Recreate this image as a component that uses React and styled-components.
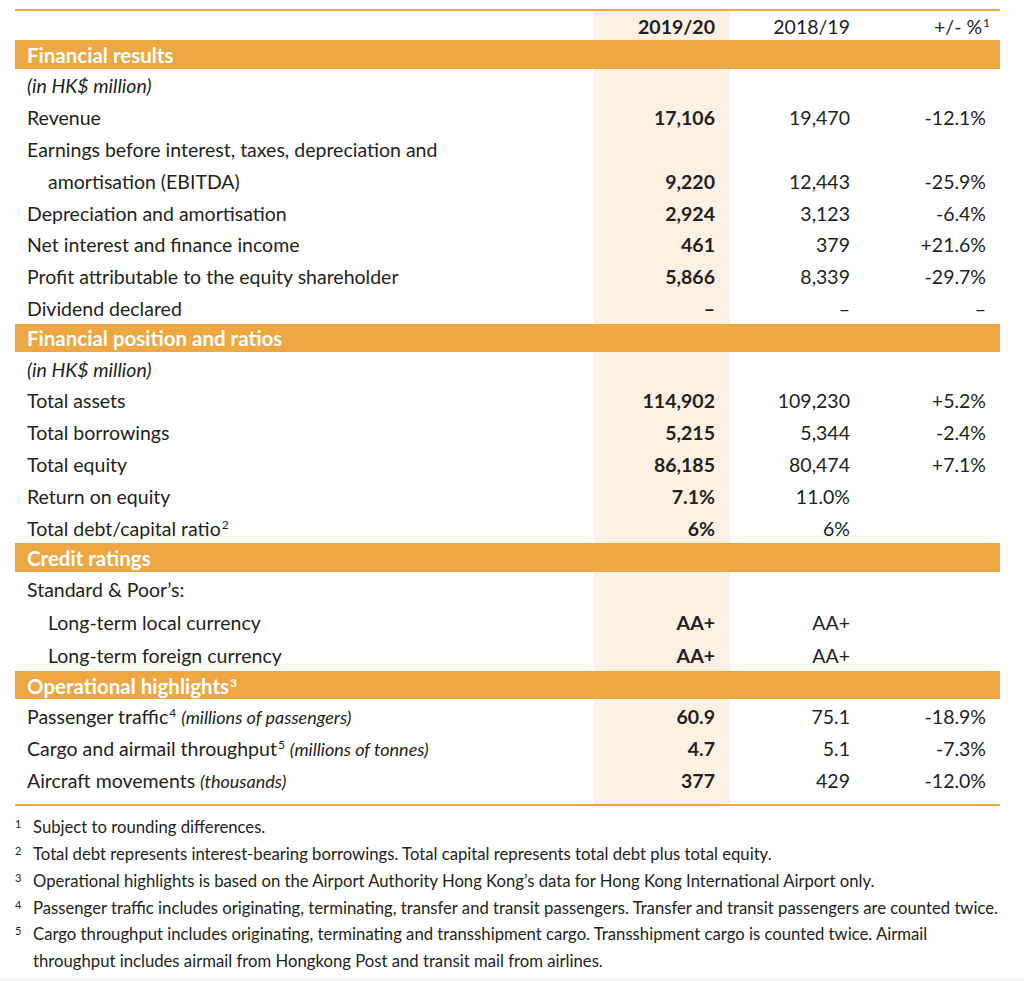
import styled, { createGlobalStyle } from "styled-components";

const GlobalStyle = createGlobalStyle`
  html, body {
    margin: 0;
    padding: 0;
    background: #f7f7f7;
  }
  body {
    font-family: Lato, "Noto Sans", sans-serif;
    color: #231f20;
  }
`;

const ORANGE = "#eda843";
const HIGHLIGHT = "#fcf1e3";

const Page = styled.div`
  background: #fff;
  min-height: 978px;
  padding: 9px 24px 0 15px;
  box-sizing: border-box;
`;

const Table = styled.div`
  border-top: 2px solid ${ORANGE};
  border-bottom: 2px solid ${ORANGE};
`;

const Row = styled.div`
  display: grid;
  grid-template-columns: 579px 136px 120px 1fr;
  height: ${(props) => props.h || 31.9}px;
  align-items: stretch;
  font-size: 19.5px;
`;

const Label = styled.div`
  display: flex;
  align-items: center;
  padding: 2px 0 0 ${(props) => (props.indent ? 33 : 12)}px;
  font-style: ${(props) => (props.italic ? "italic" : "normal")};
  white-space: nowrap;
`;

const Cur = styled.div`
  display: flex;
  align-items: center;
  justify-content: flex-end;
  padding: 2px 15px 0 0;
  background: ${HIGHLIGHT};
  font-weight: 700;
`;

const Num = styled.div`
  display: flex;
  align-items: center;
  justify-content: flex-end;
  padding: 2px ${(props) => props.pr || 0}px 0 0;
`;

const Section = styled.div`
  background: ${ORANGE};
  color: #fff;
  font-weight: 700;
  font-size: 20.5px;
  height: 28.5px;
  display: flex;
  align-items: center;
  padding: 1px 0 0 12px;
  box-sizing: border-box;
`;

const Sup = styled.sup`
  font-size: 12px;
  line-height: 0;
  vertical-align: 7px;
  margin-left: 1px;
`;

const Note = styled.span`
  font-style: italic;
  font-size: 18px;
  margin-left: 5px;
`;

const Spacer = styled.div`
  height: 9px;
  display: grid;
  grid-template-columns: 579px 136px;
  &::after {
    content: "";
    grid-column: 2;
    background: ${HIGHLIGHT};
  }
`;

const Footnotes = styled.div`
  padding-top: 8px;
  font-size: 16.7px;
`;

const Footnote = styled.div`
  display: flex;
  line-height: 26.8px;
`;

const FnNum = styled.span`
  width: 18px;
  font-size: 11px;
  line-height: 20px;
  flex-shrink: 0;
`;

const FnText = styled.span`
  flex: 1;
`;

const dash = "–";

const rows = {
  fin: [
    { label: "(in HK$ million)", italic: true },
    { label: "Revenue", v: ["17,106", "19,470", "-12.1%"] },
    { label: "Earnings before interest, taxes, depreciation and" },
    { label: "amortisation (EBITDA)", indent: true, v: ["9,220", "12,443", "-25.9%"] },
    { label: "Depreciation and amortisation", v: ["2,924", "3,123", "-6.4%"] },
    { label: "Net interest and finance income", v: ["461", "379", "+21.6%"] },
    { label: "Profit attributable to the equity shareholder", v: ["5,866", "8,339", "-29.7%"] },
    { label: "Dividend declared", v: [dash, dash, dash] },
  ],
  pos: [
    { label: "(in HK$ million)", italic: true },
    { label: "Total assets", v: ["114,902", "109,230", "+5.2%"] },
    { label: "Total borrowings", v: ["5,215", "5,344", "-2.4%"] },
    { label: "Total equity", v: ["86,185", "80,474", "+7.1%"] },
    { label: "Return on equity", v: ["7.1%", "11.0%", ""] },
    { label: "Total debt/capital ratio", sup: "2", v: ["6%", "6%", ""] },
  ],
  credit: [
    { label: "Standard & Poor’s:" },
    { label: "Long-term local currency", indent: true, v: ["AA+", "AA+", ""] },
    { label: "Long-term foreign currency", indent: true, v: ["AA+", "AA+", ""] },
  ],
  ops: [
    { label: "Passenger traffic", sup: "4", note: "(millions of passengers)", v: ["60.9", "75.1", "-18.9%"] },
    { label: "Cargo and airmail throughput", sup: "5", note: "(millions of tonnes)", v: ["4.7", "5.1", "-7.3%"] },
    { label: "Aircraft movements", note: "(thousands)", v: ["377", "429", "-12.0%"] },
  ],
};

const notes = [
  "Subject to rounding differences.",
  "Total debt represents interest-bearing borrowings. Total capital represents total debt plus total equity.",
  "Operational highlights is based on the Airport Authority Hong Kong’s data for Hong Kong International Airport only.",
  "Passenger traffic includes originating, terminating, transfer and transit passengers. Transfer and transit passengers are counted twice.",
  "Cargo throughput includes originating, terminating and transshipment cargo. Transshipment cargo is counted twice. Airmail throughput includes airmail from Hongkong Post and transit mail from airlines.",
];

const DataRow = ({ r, h }) => (
  <Row h={h}>
    <Label indent={r.indent} italic={r.italic}>
      <span>
        {r.label}
        {r.sup && <Sup>{r.sup}</Sup>}
        {r.note && <Note>{r.note}</Note>}
      </span>
    </Label>
    <Cur>{r.v ? r.v[0] : ""}</Cur>
    <Num>{r.v ? r.v[1] : ""}</Num>
    <Num pr={14}>{r.v ? r.v[2] : ""}</Num>
  </Row>
);

const App = () => {
  return (
    <Page>
      <GlobalStyle />
      <Table>
        <Row h={29}>
          <Label />
          <Cur>2019/20</Cur>
          <Num>2018/19</Num>
          <Num pr={10}>
            <span>
              +/- %<Sup>1</Sup>
            </span>
          </Num>
        </Row>
        <Section>Financial results</Section>
        {rows.fin.map((r, i) => (
          <DataRow key={i} r={r} />
        ))}
        <Section>Financial position and ratios</Section>
        {rows.pos.map((r, i) => (
          <DataRow key={i} r={r} />
        ))}
        <Section>Credit ratings</Section>
        {rows.credit.map((r, i) => (
          <DataRow key={i} r={r} h={33} />
        ))}
        <Section>
          <span>
            Operational highlights<Sup>3</Sup>
          </span>
        </Section>
        {rows.ops.map((r, i) => (
          <DataRow key={i} r={r} />
        ))}
        <Spacer />
      </Table>
      <Footnotes>
        {notes.map((n, i) => (
          <Footnote key={i}>
            <FnNum>{i + 1}</FnNum>
            <FnText>{n}</FnText>
          </Footnote>
        ))}
      </Footnotes>
    </Page>
  );
};

export default App;
